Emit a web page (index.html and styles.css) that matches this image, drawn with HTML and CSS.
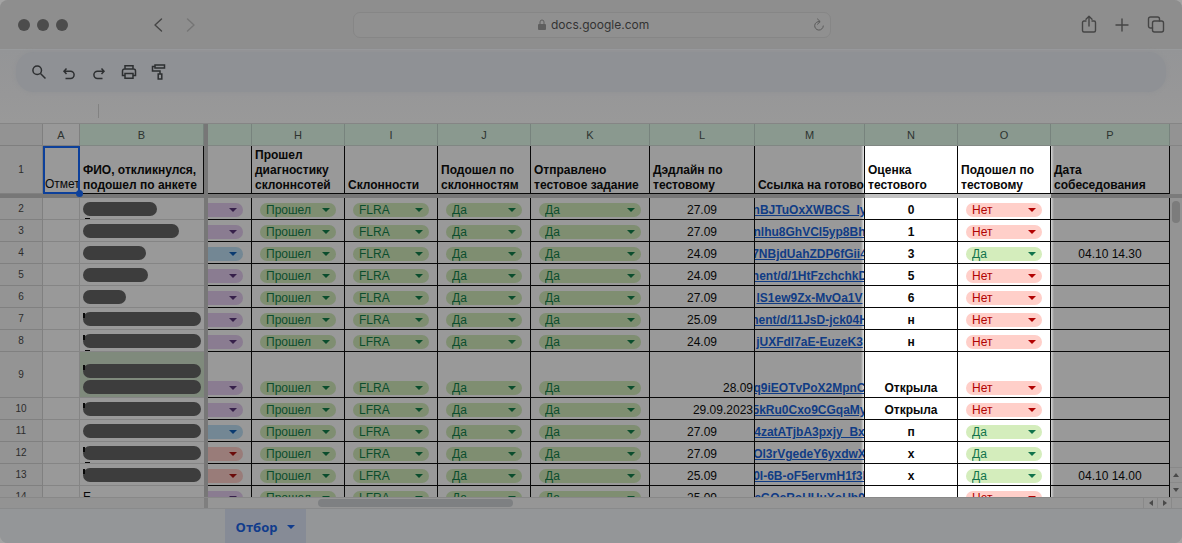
FILE: index.html
```html
<!DOCTYPE html>
<html lang="ru">
<head>
<meta charset="utf-8">
<title>Отбор</title>
<link rel="stylesheet" href="styles.css">
</head>
<body>
<div class="window">
  <header class="titlebar">
    <div class="title-left">
      <div class="lights"><i></i><i></i><i></i></div>
      <nav class="history">
        <button aria-label="Назад"><svg width="10" height="16" viewBox="0 0 10 16"><path d="M8.500 2 2 8l6.500 6"/></svg></button>
        <button class="faint" aria-label="Вперед"><svg width="10" height="16" viewBox="0 0 10 16"><path d="m1.500 2 6.500 6-6.500 6"/></svg></button>
      </nav>
    </div>
    <div class="address">
      <svg class="lock" width="8" height="12" viewBox="0 0 8 12"><path class="fill" d="M1 5h6a1 1 0 0 1 1 1v4a1 1 0 0 1-1 1H1a1 1 0 0 1-1-1V6a1 1 0 0 1 1-1z"/><path d="M2 5V3a2 2 0 0 1 4 0v2"/></svg>
      <input class="url" type="text" aria-label="Адрес" value="docs.google.com">
      <button class="reload" aria-label="Обновить"><svg width="12" height="14" viewBox="0 0 12 14"><path d="M6.500 3.500A4.300 4.300 0 1 0 10.300 8M4.500 1l2.700 2.600-2.700 2.600"/></svg></button>
    </div>
    <div class="title-right">
      <button aria-label="Поделиться"><svg width="16" height="20" viewBox="0 0 16 20"><path d="M5 6H3a1.500 1.500 0 0 0-1.500 1.500v8A1.500 1.500 0 0 0 3 17h10a1.500 1.500 0 0 0 1.500-1.500v-8A1.500 1.500 0 0 0 13 6h-2M8 11V1.500M5 4.200l3-3 3 3"/></svg></button>
      <button aria-label="Новая вкладка"><svg width="14" height="14" viewBox="0 0 14 14"><path d="M7 1v12M1 7h12"/></svg></button>
      <button aria-label="Вкладки"><svg width="18" height="18" viewBox="0 0 18 18"><rect x="5.500" y="5" width="11" height="11" rx="2"/><path d="M5.500 12H3.500a2 2 0 0 1-2-2V3a2 2 0 0 1 2-2h7a2 2 0 0 1 2 2v2"/></svg></button>
    </div>
  </header>

  <div class="tools">
    <div class="pill">
      <button aria-label="Поиск"><svg width="16" height="16" viewBox="0 0 16 16"><circle cx="6.200" cy="6.200" r="4.300"/><path d="m9.500 9.500 5 5"/></svg></button>
      <button class="low" aria-label="Отменить"><svg width="14" height="14" viewBox="0 0 14 14"><path d="M4.500 1.500 2 4.200l2.500 2.700M2 4.200h6.500a3.600 3.600 0 0 1 0 7.200H3.500"/></svg></button>
      <button class="low" aria-label="Повторить"><svg width="14" height="14" viewBox="0 0 14 14"><path d="M9.500 1.500 12 4.200 9.500 6.900M12 4.200H5.500a3.600 3.600 0 0 0 0 7.200h5"/></svg></button>
      <button aria-label="Печать"><svg width="16" height="16" viewBox="0 0 16 16"><path d="M4 5V1.800h8V5M4 11.500H1.500V7a2 2 0 0 1 2-2h9a2 2 0 0 1 2 2v4.500H12M4 9.500h8v4.700H4z"/></svg></button>
      <button aria-label="Копировать форматирование"><svg width="16" height="18" viewBox="0 0 16 18"><path d="M4 2h9.500v3H4zM4 3.500H1.500V8H9v3M7.200 11h3.600v5H7.200z"/></svg></button>
    </div>
    <div class="formula"></div>
  </div>

  <main class="sheet">
    <div class="grid">
      <table>
        <colgroup>
          <col class="c-num"><col class="c-a"><col class="c-b"><col class="c-split"><col class="c-g">
          <col class="c-std"><col class="c-std"><col class="c-std"><col class="c-k"><col class="c-l">
          <col class="c-m"><col class="c-std"><col class="c-std"><col>
        </colgroup>
        <thead>
          <tr class="letters">
            <th class="plain"></th><th class="plain lit">A</th><th>B</th><th class="split"></th><th></th>
            <th>H</th><th>I</th><th>J</th><th>K</th><th>L</th><th>M</th><th>N</th><th>O</th><th>P</th>
          </tr>
          <tr class="names">
            <th class="num">1</th>
            <th class="active"><div class="clip">Отмет</div><i class="handle"></i></th>
            <th>ФИО, откликнулся, подошел по анкете</th>
            <td class="split"></td>
            <th></th>
            <th>Прошел диагностику склоннсотей</th>
            <th>Склонности</th>
            <th>Подошел по склонностям</th>
            <th>Отправлено тестовое задание</th>
            <th>Дэдлайн по тестовому</th>
            <th class="edge-left"><div class="clip">Ссылка на готово</div></th>
            <th class="hot">Оценка тестового</th>
            <th class="hot">Подошел по тестовому</th>
            <th class="edge-right">Дата собеседования</th>
          </tr>
          <tr class="freeze"><td colspan="11"></td><td class="bright" colspan="2"></td><td></td></tr>
        </thead>
        <tbody id="rows"></tbody>
      </table>
    </div>
    <div class="vscroll">
      <div class="vhead"></div><div class="vnames"></div><div class="vtrack"><i class="vthumb"></i></div>
      <button aria-label="Вверх"><svg width="6" height="4" viewBox="0 0 6 4"><path d="M0 4h6L3 0z"/></svg></button>
      <button aria-label="Вниз"><svg width="6" height="4" viewBox="0 0 6 4"><path d="M0 0h6L3 4z"/></svg></button>
    </div>
  </main>

  <div class="hscroll">
    <div class="hleft"></div>
    <div class="htrack"><i class="hthumb"></i></div>
    <button aria-label="Влево"><svg width="4" height="6" viewBox="0 0 4 6"><path d="M4 0v6L0 3z"/></svg></button>
    <button aria-label="Вправо"><svg width="4" height="6" viewBox="0 0 4 6"><path d="M0 0v6l4-3z"/></svg></button>
    <div class="hcorner"></div>
  </div>

  <footer class="tabs">
    <button class="tab">Отбор <svg width="8" height="4" viewBox="0 0 8 4"><path d="M0 0h8L4 4z"/></svg></button>
  </footer>
</div>
<script src="rows.js"></script>
</body>
</html>
```

FILE: styles.css
```css
* { box-sizing: border-box; }

body {
  margin: 0;
  background: #a4a4a4;
  font-family: "Liberation Sans", Arial, sans-serif;
  font-size: 12px;
  color: #080808;
}

button {
  display: flex;
  align-items: center;
  justify-content: center;
  margin: 0;
  padding: 0;
  border: 0;
  background: none;
  font: inherit;
  color: inherit;
}

.window {
  display: flex;
  flex-direction: column;
  height: 100vh;
  min-height: 300px;
  overflow: hidden;
  border-radius: 8px;
  background: #999;
}

/* Browser bar */
.titlebar {
  flex: none;
  display: grid;
  grid-template-columns: 1fr minmax(200px, 478px) 1fr;
  align-items: center;
  height: 49px;
  padding: 0 17px 0 18px;
  background: #8e8e8e;
}
.titlebar svg { fill: none; stroke: #454545; stroke-width: 1.4; stroke-linecap: round; stroke-linejoin: round; }
.title-left { display: flex; align-items: center; gap: 85px; }
.lights { display: flex; gap: 7px; }
.lights i { width: 12px; height: 12px; border-radius: 50%; background: #4c4c4c; }
.history { display: flex; gap: 23px; }
.history .faint svg { stroke: #757575; }
.title-right { display: flex; align-items: center; justify-content: flex-end; gap: 18px; }

.address {
  position: relative;
  display: flex;
  align-items: center;
  justify-content: center;
  gap: 5px;
  height: 26px;
  padding-left: 4px;
  border: 1px solid #868686;
  border-radius: 7px;
  background: #909090;
}
.titlebar .lock { stroke: #5f5f5f; stroke-width: 1; }
.lock .fill { fill: #5f5f5f; stroke: none; }
.url {
  width: 98px;
  padding: 0;
  border: 0;
  background: none;
  font: 400 12px Inter, sans-serif;
  color: #333;
}
.reload { position: absolute; right: 5px; }
.titlebar .reload svg { stroke: #5a5a5a; stroke-width: 1; }

/* Document toolbar */
.tools {
  flex: none;
  height: 75px;
  padding: 2px 16px 0;
  border-top: 1px solid #989a9c;
  border-bottom: 1px solid #858585;
  background: linear-gradient(#949597, #979798 60%, #999);
}
.pill {
  display: flex;
  align-items: center;
  gap: 14px;
  height: 40px;
  padding: 0 15px;
  border-radius: 18px;
  background: #8f9195;
  box-shadow: 0 0 4px #8f9195;
}
.pill svg { fill: none; stroke: #2d2f31; stroke-width: 1.5; }
.pill .low { padding-top: 4px; width: 16px; }
.formula { width: 83px; height: 14px; margin-top: 12px; border-right: 1px solid #828282; }

/* Spreadsheet */
.sheet { flex: 1; min-height: 0; display: flex; overflow: hidden; }
.grid { flex: 1; min-width: 0; overflow: hidden; }

table { width: 100%; border-collapse: separate; border-spacing: 0; table-layout: fixed; }
.c-num { width: 43px; }
.c-a { width: 37px; }
.c-b { width: 124px; }
.c-split { width: 4px; }
.c-g { width: 44px; }
.c-std { width: 93px; }
.c-k { width: 119px; }
.c-l { width: 105px; }
.c-m { width: 110px; }

th, td {
  padding: 0;
  border-right: 1px solid #080808;
  border-bottom: 1px solid #080808;
  text-align: left;
  vertical-align: bottom;
}

.letters th {
  height: 22px;
  border-right-color: #77837d;
  border-bottom-color: #808783;
  background: #8a998f;
  font-size: 11px;
  font-weight: 400;
  text-align: center;
  vertical-align: middle;
  color: #2d332f;
}
.letters .plain { background: #939393; border-color: #7f7f7f; }
.letters .lit { background: #999; }

.names th { height: 48px; padding: 0 0 0 3px; line-height: 15px; font-weight: 700; }
.names .num, .num {
  padding: 0;
  border-color: #808080;
  background: #949494;
  font-size: 10px;
  font-weight: 400;
  line-height: 14px;
  text-align: center;
  vertical-align: middle;
  color: #2c2c2c;
}
.names .active { position: relative; border: 2px solid #0d409a; padding: 0; font-weight: 400; }
.handle { position: absolute; right: -5px; bottom: -5px; z-index: 1; width: 7px; height: 7px; border-radius: 50%; background: #0d409a; }
.clip { overflow: hidden; white-space: nowrap; }

.letters .split, .split { border: 0; background: #777; }
.freeze td { height: 4px; border: 0; background: #777; }
.freeze .bright { background: #c2c2c2; }

.hot { background: #fff; }
.edge-left { background: linear-gradient(to left, #e8e8e8, #999 3px); }
.edge-right { background: linear-gradient(to right, #d6d6d6, #999 3px); }

tbody td { height: 22px; line-height: 14px; padding-bottom: 2px; }
tbody .tall td { height: 46px; }
tbody .a { border-color: #858585; }
tbody .b { border-color: #858585; border-right: 0; padding: 0 3px 3px; }
tbody .tall .b { background: #7f8a7c; }
.center { text-align: center; }
.right { text-align: right; padding-right: 1px; }
.bold { font-weight: 700; text-align: center; }

.link { display: flex; justify-content: center; overflow: hidden; white-space: nowrap; font-weight: 700; }
.link a { color: #103c85; text-decoration: underline; }

.bar { position: relative; display: block; height: 14px; border-radius: 7px; background: #3d3d3d; }
.bar + .bar { margin-top: 2px; }
.peek::before { content: ""; position: absolute; left: 0; top: 1px; width: 2px; height: 5px; background: #080808; }
.under::after { content: ""; position: absolute; left: 2px; bottom: -3px; width: 5px; height: 1px; background: #080808; }

.chip {
  appearance: none;
  display: block;
  width: calc(100% - 16px);
  height: 14px;
  margin: 0 8px;
  padding: 0 0 0 6px;
  border: 0;
  border-radius: 7px;
  font: 12px/14px "Liberation Sans", Arial, sans-serif;
}
.cut { width: calc(100% - 8px); margin: 0 8px 0 0; border-radius: 0 7px 7px 0; }
.pick { position: relative; }
.pick::after {
  content: "";
  position: absolute;
  right: 14px;
  top: 5px;
  border: 4px solid transparent;
  border-top-color: currentColor;
  border-bottom: 0;
  pointer-events: none;
}
.pick select { color: inherit; }
.green { color: #0b4d2d; }
.green select { background: #7f8e71; }
.violet { color: #36204a; }
.violet select { background: #8a7c91; }
.blue { color: #0a3a70; }
.blue select { background: #738794; }
.red { color: #6b0a0a; }
.red select { background: #997c79; }
.hot .green { color: #11734b; }
.hot .green select { background: #d4edbc; }
.hot .red { color: #b10202; }
.hot .red select { background: #ffcfc9; }

/* Scroll bars */
.vscroll { flex: none; display: flex; flex-direction: column; width: 12px; background: #949494; }
.vhead { height: 22px; background: #939393; border-bottom: 1px solid #858585; }
.vnames { height: 52px; border-bottom: 4px solid #7b7b7b; }
.vtrack { flex: 1; padding: 3px 2px; }
.vthumb { display: block; width: 8px; height: 22px; border-radius: 4px; background: #7c7c7c; }
.vscroll button { height: 15px; border-top: 1px solid #898989; }
.vscroll svg, .hscroll svg { fill: #4a4a4a; }

.hscroll { flex: none; display: flex; height: 12px; border-top: 1px solid #888; border-bottom: 1px solid #898a8b; background: #969696; }
.hleft { width: 208px; border-right: 4px solid #7f7f7f; background: #939393; }
.htrack { flex: 1; padding: 1px 110px; }
.hthumb { display: block; width: 195px; height: 8px; border-radius: 4px; background: #7e8082; }
.hscroll button { width: 14px; border-left: 1px solid #898989; }
.hcorner { width: 11px; border-left: 1px solid #898989; }

.tabs { flex: none; display: flex; height: 34px; padding-left: 225px; background: #949698; }
.tab { gap: 10px; width: 81px; padding-top: 2px; background: #868b96; font: 700 13px "Open Sans", sans-serif; color: #113c8c; }
.tab svg { fill: #113c8c; }
```

FILE: rows.js
```js
// [number, name bars, status colour, code, deadline, link text, score, passed, interview]
// A bar is [width, "peek" / "under" flags].
const full = 118;
const data = [
  [2, [[74, "under"]], "violet", "FLRA", "27.09", "nBJTuOxXWBCS_Iy", "0", false, ""],
  [3, [[96, ""]], "violet", "FLRA", "27.09", "nlhu8GhVCl5yp8Bh", "1", false, ""],
  [4, [[63, ""]], "blue", "FLRA", "24.09", "7NBjdUahZDP6fGii4", "3", true, "04.10 14.30"],
  [5, [[65, ""]], "violet", "FLRA", "24.09", "nent/d/1HtFzchchkD", "5", false, ""],
  [6, [[43, ""]], "violet", "FLRA", "27.09", "lS1ew9Zx-MvOa1V", "6", false, ""],
  [7, [[full, "peek"]], "violet", "FLRA", "25.09", "nent/d/11JsD-jck04H", "н", false, ""],
  [8, [[full, "peek under"]], "violet", "LFRA", "24.09", "jUXFdI7aE-EuzeK3", "н", false, ""],
  [9, [[full, "peek"], [full, ""]], "violet", "FLRA", "28.09", "q9iEOTvPoX2MpnC", "Открыла", false, ""],
  [10, [[full, "peek"]], "violet", "LFRA", "29.09.2023", "5kRu0Cxo9CGqaMy", "Открыла", false, ""],
  [11, [[full, ""]], "blue", "LFRA", "27.09", "4zatATjbA3pxjy_Bx", "п", true, ""],
  [12, [[full, "peek under"]], "red", "LFRA", "27.09", "Ol3rVgedeY6yxdwX", "х", true, ""],
  [13, [[full, "peek"]], "red", "LFRA", "25.09", "0I-6B-oF5ervmH1f3l", "х", true, "04.10 14.00"],
  [14, null, "violet", "LFRA", "25.09", "cGQcRoUUuXoUb9", "", false, ""]
];

const chip = (label, color, name, cut) =>
  `<div class="pick ${color}"><select class="chip ${cut ? "cut" : ""}" aria-label="${name}"><option>${label}</option></select></div>`;

document.getElementById("rows").innerHTML = data.map(
  ([n, bars, status, code, date, link, score, passed, meet]) => `
  <tr class="${n === 9 ? "tall" : ""}">
    <th class="num">${n}</th>
    <td class="a"></td>
    <td class="b">${bars ? bars.map(([w, flags]) => `<span class="bar ${flags}" style="width:${w}px"></span>`).join("") : "Е"}</td>
    <td class="split"></td>
    <td>${chip("", status, "Статус", true)}</td>
    <td>${chip("Прошел", "green", "Диагностика")}</td>
    <td>${chip(code, "green", "Склонности")}</td>
    <td>${chip("Да", "green", "Подошел по склонностям")}</td>
    <td>${chip("Да", "green", "Отправлено задание")}</td>
    <td class="${n === 9 || n === 10 ? "right" : "center"}">${date}</td>
    <td class="edge-left"><div class="link"><a href="#">${link}</a></div></td>
    <td class="hot bold">${score}</td>
    <td class="hot">${chip(passed ? "Да" : "Нет", passed ? "green" : "red", "Подошел по тестовому")}</td>
    <td class="edge-right center">${meet}</td>
  </tr>`).join("");
```
